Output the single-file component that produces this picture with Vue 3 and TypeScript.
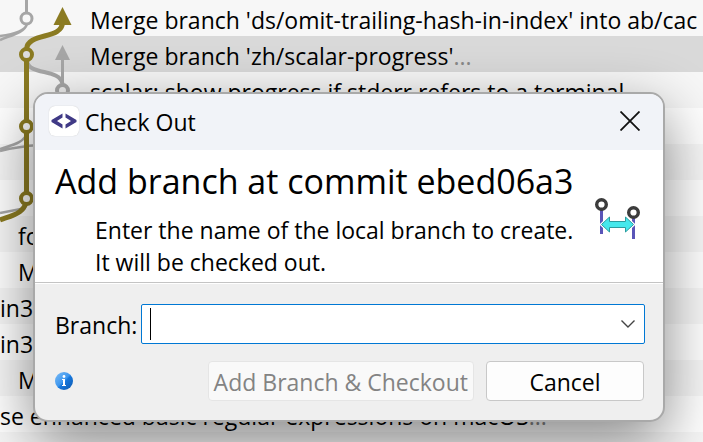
<script setup lang="ts">
import { ref } from 'vue'

interface Commit {
  text: string
  more?: boolean
  indent: 'far' | 'near' | 'none'
  selected?: boolean
}

const commits: Commit[] = [
  { text: "Merge branch 'ds/omit-trailing-hash-in-index' into ab/cac", indent: 'far' },
  { text: "Merge branch 'zh/scalar-progress'", more: true, indent: 'far', selected: true },
  { text: 'scalar: show progress if stderr refers to a terminal', indent: 'far' },
  { text: '', indent: 'far' },
  { text: '', indent: 'far' },
  { text: '', indent: 'far' },
  { text: 'fo', indent: 'near' },
  { text: 'M', indent: 'near' },
  { text: 'in32', indent: 'none' },
  { text: 'in32', indent: 'none' },
  { text: 'M', indent: 'near' },
  { text: 'se enhanced basic regular expressions on macOS', more: true, indent: 'none' },
  { text: '', indent: 'none' },
]

const branch = ref('')
</script>

<template>
  <main class="window">
    <ol class="log">
      <li
        v-for="(c, i) in commits"
        :key="i"
        class="commit"
        :class="[c.indent, { selected: c.selected }]"
      >{{ c.text }}<span v-if="c.more" class="more">...</span></li>
    </ol>

    <svg class="graph" width="90" height="250" viewBox="0 0 90 250" fill="none" aria-hidden="true">
      <g stroke="#a6a6a6">
        <path d="M26.500 0V13" stroke-width="3" />
        <path d="M27 24C25 31 15 34 0 36M27 24C24 33 12 35 0 40" stroke-width="2.500" />
        <path d="M27 61C29 76 60 68 62.500 84" stroke-width="4" />
        <path d="M62.500 84V60" stroke-width="3" />
        <path d="M27 133C24 143 12 145 0 149M0 151C12 148 24 146 40 145M0 213L26 208" stroke-width="2.500" />
      </g>
      <path d="M62.500 45L70 60H55Z" fill="#a6a6a6" />
      <circle cx="26.500" cy="18.500" r="5.500" fill="#f8f8f8" stroke="#a6a6a6" stroke-width="3" />
      <circle cx="62.500" cy="90.500" r="5.500" fill="#eee" stroke="#a6a6a6" stroke-width="4" />
      <g stroke="#8b7b22" stroke-width="5">
        <path d="M62.500 22C62.500 40 28 32 26.500 49" />
        <path d="M26.500 60V198C26.500 214 10 216 0 220" />
      </g>
      <path d="M62.500 7L71.500 25H53.500Z" fill="#8b7b22" />
      <g stroke="#8b7b22" stroke-width="4" fill="#fafafa">
        <circle cx="26.500" cy="54.500" r="5.500" fill="#ddd" />
        <circle cx="26.500" cy="126.500" r="5.500" />
        <circle cx="26.500" cy="198.500" r="5.500" />
      </g>
    </svg>

    <form class="dialog" role="dialog" aria-labelledby="title" @submit.prevent>
      <header class="titlebar">
        <span class="app">
          <svg width="26" height="16" viewBox="0 0 26 16" fill="#403a86" aria-hidden="true">
            <path d="M11.500 .5V4.500L6 8L11.500 11.500V15.500L.5 9V7Z" />
            <path d="M14.500 .5V4.500L20 8L14.500 11.500V15.500L25.500 9V7Z" />
          </svg>
        </span>
        <span id="title" class="title">Check Out</span>
        <button type="button" class="close" aria-label="Close">
          <svg width="20" height="20" viewBox="0 0 20 20" stroke="#111" stroke-width="1.800" aria-hidden="true">
            <path d="M.5 .5L19.500 19.500M19.500 .5L.5 19.500" />
          </svg>
        </button>
      </header>

      <section class="intro">
        <div class="copy">
          <h1>Add branch at commit ebed06a3</h1>
          <p>Enter the name of the local branch to create.<br>It will be checked out.</p>
        </div>
        <svg class="art" width="48" height="44" viewBox="0 0 48 44" aria-hidden="true">
          <path d="M7.500 12V36M39.500 20V41" stroke="#5a55b8" stroke-width="3" />
          <g fill="#fff" stroke="#3c3c3c" stroke-width="3.400">
            <circle cx="7.500" cy="6.500" r="4.800" />
            <circle cx="39.500" cy="14.500" r="4.800" />
          </g>
          <path
            d="M7.500 26.500L15.500 19V23.500H31.500V19L39.500 26.500L31.500 34V29.500H15.500V34Z"
            fill="#45e8ec" stroke="#fff" stroke-width="3"
          />
          <path
            d="M7.500 26.500L15.500 19V23.500H31.500V19L39.500 26.500L31.500 34V29.500H15.500V34Z"
            fill="#45e8ec" stroke="#2b9b9e" stroke-width="1"
          />
        </svg>
      </section>

      <section class="body">
        <div class="field">
          <label for="branch">Branch:</label>
          <div class="combo">
            <span class="caret" />
            <input id="branch" v-model="branch" type="text" role="combobox" aria-expanded="false" autocomplete="off">
            <button type="button" class="drop" aria-label="Show branches">
              <svg width="14" height="8" viewBox="0 0 14 8" fill="none" stroke="#444" stroke-width="1.400" aria-hidden="true">
                <path d="M.5 .5L7 7L13.500 .5" />
              </svg>
            </button>
          </div>
        </div>
        <div class="actions">
          <button type="button" class="info" aria-label="Information">
            <svg width="18" height="18" viewBox="0 0 18 18" aria-hidden="true">
              <defs>
                <linearGradient id="ball" x1="0" y1="0" x2="1" y2="1">
                  <stop offset="0" stop-color="#7cbcf5" />
                  <stop offset=".48" stop-color="#3d96ee" />
                  <stop offset=".55" stop-color="#1576dc" />
                  <stop offset="1" stop-color="#0d58ac" />
                </linearGradient>
              </defs>
              <circle cx="9" cy="9" r="9" fill="url(#ball)" />
              <circle cx="9" cy="4.500" r="1.400" fill="#fff" />
              <path d="M7 7H10V13H11V14H7V13H8V8H7Z" fill="#fff" />
            </svg>
          </button>
          <button type="submit" class="btn add" disabled>Add Branch &amp; Checkout</button>
          <button type="button" class="btn cancel">Cancel</button>
        </div>
      </section>
    </form>
  </main>
</template>

<style>
body {
  margin: 0;
  overflow: hidden;
}
</style>

<style scoped>
* {
  box-sizing: border-box;
}
.window {
  position: relative;
  height: 100vh;
  overflow: hidden;
  font: 23px/36px "Open Sans", "Noto Sans", sans-serif;
  color: #000;
}
button,
input {
  margin: 0;
  padding: 0;
  border: 0;
  background: none;
  font: inherit;
  color: inherit;
}
svg {
  display: block;
}
.log {
  margin: 0;
  padding: 0;
  list-style: none;
}
.commit {
  height: 36px;
  padding-top: 2px;
  white-space: nowrap;
  background: #fff;
}
.commit:nth-child(odd) {
  background: #f7f7f7;
}
.commit.selected {
  background: #d9d9d9;
}
.commit.far {
  padding-left: 90px;
}
.commit.near {
  padding-left: 18px;
}
.more {
  color: #888;
}
.graph {
  position: absolute;
  top: 0;
  left: 0;
}
.dialog {
  position: absolute;
  top: 92px;
  left: 33px;
  right: 38px;
  overflow: hidden;
  border: 2px solid #a9a9a9;
  border-radius: 15px;
  background: #efefef;
  box-shadow: 0 20px 60px rgba(0, 0, 0, 0.48);
}
.titlebar {
  display: flex;
  align-items: center;
  height: 56px;
  padding: 0 23px 2px 14px;
  background: #f1f3f8;
}
.app {
  display: grid;
  place-items: center;
  width: 30px;
  height: 30px;
  border-radius: 6px;
  background: #fff;
  box-shadow: 0 0 1px #bbb;
}
.title {
  flex: 1;
  margin-left: 6px;
  padding-top: 2px;
}
.intro {
  display: flex;
  justify-content: space-between;
  padding: 10px 21px 4px 20px;
  border-bottom: 1px solid #c4c4c4;
  background: #fff;
}
h1 {
  margin: 0;
  font-size: 34px;
  line-height: 42px;
  font-weight: 400;
  white-space: nowrap;
}
p {
  margin: 12px 0 0 40px;
  line-height: 32px;
  white-space: nowrap;
}
.art {
  flex: none;
  margin: 38px 0 0 -20px;
}
.body {
  padding: 20px 18px 19px 20px;
  border-top: 1px solid #fff;
}
.field {
  display: flex;
  align-items: center;
  gap: 4px;
}
label {
  padding-top: 2px;
}
.combo {
  flex: 1;
  display: flex;
  align-items: center;
  height: 40px;
  padding: 0 9px 0 8px;
  border: 1px solid #0078d4;
  border-radius: 2px;
  background: #fff;
}
.caret {
  width: 1px;
  height: 32px;
  background: #000;
}
.combo input {
  flex: 1;
  min-width: 0;
  outline: 0;
}
.actions {
  display: flex;
  align-items: center;
  gap: 12px;
  margin-top: 17px;
  padding-right: 1px;
}
.info {
  margin-right: auto;
}
.btn {
  height: 40px;
  padding: 2px 5px 0;
  line-height: 36px;
  border: 1px solid #c8c8c8;
  border-radius: 4px;
  background: #fdfdfd;
}
.add {
  border-color: #e5e5e5;
  background: #f9f9f9;
  color: #838383;
}
.cancel {
  width: 158px;
}
</style>
